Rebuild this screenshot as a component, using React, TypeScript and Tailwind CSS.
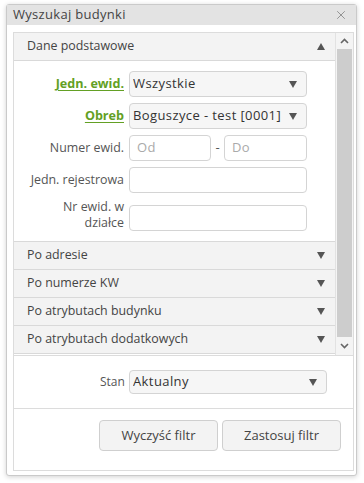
import { X } from "lucide-react";

const Tri = ({ up = false }: { up?: boolean }) => (
  <svg width="8" height="7" viewBox="0 0 8 7" className="shrink-0">
    <polygon points={up ? "0,7 8,7 4,0" : "0,0 8,0 4,7"} fill="#555" />
  </svg>
);

const Select = ({ value, className = "" }: { value: string; className?: string }) => (
  <div
    className={`flex items-center justify-between rounded-[4px] border border-[#d4d4d4] bg-[#f6f6f6] pl-[3px] pr-[9px] text-[13px] tracking-[0.4px] text-[#333] ${className}`}
  >
    <span className="truncate">{value}</span>
    <Tri />
  </div>
);

const Input = ({ placeholder = "", className = "" }: { placeholder?: string; className?: string }) => (
  <div
    className={`flex items-center rounded-[4px] border border-[#d4d4d4] bg-white pl-[7px] text-[13px] tracking-[0.3px] text-[#aaa] ${className}`}
  >
    {placeholder}
  </div>
);

const Header = ({ title, open = false }: { title: string; open?: boolean }) => (
  <div className="flex h-[28px] items-center justify-between border-b border-[#d9d9d9] bg-[#f3f3f3] pl-[13px] pr-[10px] text-[12.4px] text-[#444]">
    <span>{title}</span>
    <Tri up={open} />
  </div>
);

const Label = ({ children, green = false }: { children: React.ReactNode; green?: boolean }) => (
  <div
    className={`w-[110px] text-right leading-[16px] ${
      green ? "text-[12.6px] font-bold text-[#63a024] underline underline-offset-2" : "text-[12.4px] text-[#555]"
    }`}
  >
    {children}
  </div>
);

export default function App() {
  return (
    <div className="min-h-[483px] bg-white pl-[6px] pt-[4px]" style={{ fontFamily: '"Open Sans", sans-serif' }}>
      <div className="flex h-[472px] w-[351px] flex-col rounded-[3px] border border-[#cacaca] bg-white shadow-[0_1px_5px_rgba(0,0,0,0.18)]">
        <div className="flex h-[20px] items-center justify-between bg-[#e3e3e3] pl-[6px] pr-[8px] text-[13px] tracking-[0.3px] text-[#444]">
          <span>Wyszukaj budynki</span>
          <X size={14} strokeWidth={1.5} color="#888" />
        </div>

        <div className="flex flex-1 flex-col pb-[4px] pl-[6px] pr-[2px] pt-[7px]">
          <div className="flex flex-1 flex-col border border-[#dcdcdc]">
            <div className="flex h-[323px] border-b border-[#dcdcdc]">
              <div className="flex w-[322px] flex-col border-r border-[#e2e2e2]">
                <Header title="Dane podstawowe" open />
                <div className="flex h-[181px] flex-col gap-[6px] border-b border-[#d9d9d9] pt-[10px]">
                  <div className="flex items-center gap-[5px]">
                    <Label green>Jedn. ewid.</Label>
                    <Select value="Wszystkie" className="h-[26px] w-[178px]" />
                  </div>
                  <div className="flex items-center gap-[5px]">
                    <Label green>Obreb</Label>
                    <Select value="Boguszyce - test [0001]" className="h-[26px] w-[178px]" />
                  </div>
                  <div className="flex items-center gap-[5px]">
                    <Label>Numer ewid.</Label>
                    <div className="flex items-center">
                      <Input placeholder="Od" className="h-[26px] w-[82px]" />
                      <span className="w-[13px] text-center text-[13px] text-[#555]">-</span>
                      <Input placeholder="Do" className="h-[26px] w-[83px]" />
                    </div>
                  </div>
                  <div className="flex items-center gap-[5px]">
                    <Label>Jedn. rejestrowa</Label>
                    <Input className="h-[26px] w-[178px]" />
                  </div>
                  <div className="flex items-center gap-[5px]">
                    <Label>
                      <div>Nr ewid. w</div>
                      <div>działce</div>
                    </Label>
                    <Input className="mt-[6px] h-[26px] w-[178px]" />
                  </div>
                </div>
                <Header title="Po adresie" />
                <Header title="Po numerze KW" />
                <Header title="Po atrybutach budynku" />
                <Header title="Po atrybutach dodatkowych" />
              </div>
              <div className="flex w-[17px] flex-col bg-[#f4f4f4]">
                <div className="flex h-[16px] items-center justify-center">
                  <svg width="9" height="6" viewBox="0 0 9 6">
                    <polyline points="1,5 4.5,1.5 8,5" fill="none" stroke="#666" strokeWidth="1.6" />
                  </svg>
                </div>
                <div className="mx-[1px] flex-1 bg-[#cdcdcd]" />
                <div className="flex h-[18px] items-center justify-center">
                  <svg width="9" height="6" viewBox="0 0 9 6">
                    <polyline points="1,1 4.5,4.5 8,1" fill="none" stroke="#666" strokeWidth="1.6" />
                  </svg>
                </div>
              </div>
            </div>

            <div className="flex h-[53px] items-center border-b border-[#dcdcdc] pl-[86px]">
              <span className="w-[23px] text-right text-[12px] text-[#555]">Stan</span>
              <Select value="Aktualny" className="ml-[6px] h-[24px] w-[198px]" />
            </div>

            <div className="flex flex-1 items-start justify-end gap-[4px] pr-[12px] pt-[11px]">
              <button className="h-[31px] w-[119px] rounded-[4px] border border-[#cfcfcf] bg-[#f3f3f3] text-[13px] text-[#444]">
                Wyczyść filtr
              </button>
              <button className="h-[31px] w-[119px] rounded-[4px] border border-[#cfcfcf] bg-[#f3f3f3] text-[13px] text-[#444]">
                Zastosuj filtr
              </button>
            </div>
          </div>
        </div>
      </div>
    </div>
  );
}
